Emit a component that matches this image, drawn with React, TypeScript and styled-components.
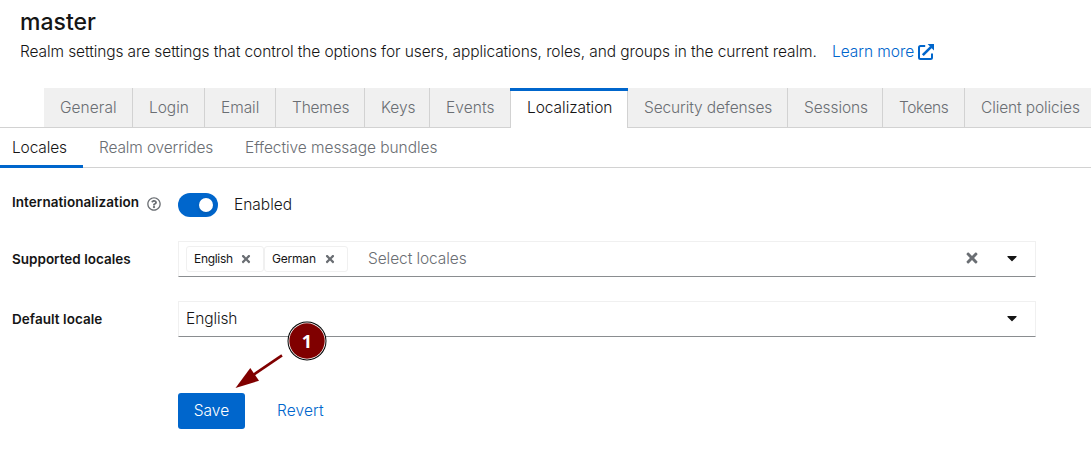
import React from "react";
import styled, { createGlobalStyle } from "styled-components";
import { FaTimes, FaCaretDown, FaRegQuestionCircle } from "react-icons/fa";

const Global = createGlobalStyle`
  *, *::before, *::after { box-sizing: border-box; }
  body { margin: 0; background: #fff; overflow: hidden; }
  #root { font-family: Inter, "Noto Sans", sans-serif; font-size: 15.5px; font-weight: 330; line-height: 24px; color: #151515; }
  button { font: inherit; border: 0; background: none; padding: 0; }
`;

const Page = styled.main`
  position: relative;
  width: 1091px;
  height: 472px;
  overflow: hidden;
`;

const Header = styled.header`
  height: 88px;
  padding: 6px 20px 0;
`;

const Title = styled.h1`
  margin: 0;
  font-size: 23px;
  font-weight: 500;
  line-height: 32px;
`;

const Description = styled.div`
  display: flex;
  align-items: center;
  margin-top: 2px;
  white-space: nowrap;
`;

const Fit = styled.span<{ $ls?: number }>`
  letter-spacing: ${(p) => p.$ls ?? 0}px;
  white-space: nowrap;
`;

const DescriptionText = styled(Fit)`
  width: 812px;
`;

const LearnMore = styled.a`
  display: flex;
  align-items: center;
  color: #06c;
  svg { margin-left: 4px; }
`;

const Tabs = styled.nav`
  display: flex;
  height: 40px;
  padding-left: 44px;
  border-bottom: 1px solid #d2d2d2;
`;

const Tab = styled.button<{ $w: number; $active?: boolean }>`
  flex: none;
  width: ${(p) => p.$w}px;
  height: ${(p) => (p.$active ? 40 : 39)}px;
  padding-left: 16px;
  text-align: left;
  color: ${(p) => (p.$active ? "#151515" : "#6a6e73")};
  background: ${(p) => (p.$active ? "#fff" : "#f0f0f0")};
  box-shadow: inset -1px 0 0 #d2d2d2;
  ${(p) =>
    p.$active &&
    `
    position: relative;
    margin-left: -1px;
    padding-left: 17px;
    box-shadow: inset 0 3px 0 #06c, inset 1px 0 0 #d2d2d2, inset -1px 0 0 #d2d2d2;
  `}
`;

const SubTabs = styled.nav`
  display: flex;
  height: 40px;
  border-bottom: 1px solid #d2d2d2;
`;

const SubTab = styled.button<{ $w: number; $active?: boolean }>`
  width: ${(p) => p.$w}px;
  height: 40px;
  padding: 0 0 0 ${(p) => (p.$active ? 12 : 16)}px;
  text-align: left;
  color: ${(p) => (p.$active ? "#151515" : "#6a6e73")};
  box-shadow: ${(p) => (p.$active ? "inset 0 -3px 0 #06c" : "none")};
`;

const Form = styled.form`
  display: flex;
  flex-direction: column;
  gap: 24px;
  padding: 25px 0 0 12px;
`;

const Row = styled.div`
  display: grid;
  grid-template-columns: 166px 858px;
  align-items: center;
  height: 36px;
`;

const Label = styled.label`
  display: flex;
  align-items: center;
  font-size: 13.5px;
  font-weight: 600;
  svg { margin: 3px 0 0 8px; color: #6a6e73; }
`;

const SwitchRow = styled(Row)`
  align-items: start;
  height: 24px;
  ${Label} { margin-top: -3px; }
`;

const SwitchLine = styled.div`
  display: flex;
  align-items: center;
  gap: 16px;
`;

const Switch = styled.span`
  display: flex;
  align-items: center;
  justify-content: flex-end;
  width: 40px;
  height: 24px;
  padding-right: 5px;
  border-radius: 12px;
  background: #06c;
  &::after {
    content: "";
    width: 14px;
    height: 14px;
    border-radius: 50%;
    background: #fff;
    box-shadow: 0 2px 4px rgba(3, 3, 3, 0.12);
  }
`;

const Select = styled.div`
  display: flex;
  align-items: center;
  height: 36px;
  padding: 0 15px 0 7px;
  border: 1px solid #f0f0f0;
  border-bottom-color: #8a8d90;
`;

const Chip = styled.span<{ $w: number }>`
  display: flex;
  flex: none;
  align-items: center;
  width: ${(p) => p.$w}px;
  height: 26px;
  padding-left: 7px;
  border: 1px solid #f0f0f0;
  border-radius: 3px;
  font-size: 12px;
  font-weight: 400;
  svg { margin-left: auto; margin-right: 11px; color: #6a6e73; }
`;

const Placeholder = styled(Fit)`
  margin-left: 20px;
  color: #6a6e73;
`;

const SelectIcons = styled.span`
  display: flex;
  align-items: center;
  gap: 24px;
  margin-left: auto;
  svg { margin-top: -2px; }
  svg:first-child:not(:last-child) { color: #6a6e73; }
`;

const Actions = styled.div`
  display: flex;
  gap: 32px;
  padding: 32px 0 0 166px;
`;

const SaveButton = styled.button`
  width: 67px;
  height: 36px;
  border-radius: 3px;
  color: #fff;
  background: #06c;
`;

const RevertButton = styled.button`
  height: 36px;
  color: #06c;
`;

const Callout = styled.svg`
  position: absolute;
  left: 230px;
  top: 316px;
`;

const ExternalIcon = () => (
  <svg width="17" height="16" viewBox="0 0 17 16" fill="none" stroke="#06c" strokeWidth="2">
    <path d="M7.2 2H2.5Q1 2 1 3.5V13.5Q1 15 2.5 15H12.5Q14 15 14 13.5V9.5" />
    <path d="M4.8 11.2 13.2 2.8" strokeWidth="2.6" />
    <path d="M9.6 0H16V6.4Z" fill="#06c" stroke="none" />
  </svg>
);

const tabs: [string, number, number][] = [
  ["General", 89, 0.05],
  ["Login", 72, -0.05],
  ["Email", 71, -0.05],
  ["Themes", 89, -0.2],
  ["Keys", 65, -0.05],
  ["Events", 81, 0.1],
  ["Localization", 118, -0.05],
  ["Security defenses", 160, -0.12],
  ["Sessions", 95, -0.1],
  ["Tokens", 82, -0.4],
  ["Client policies", 140, -0.12],
];

export default function App() {
  return (
    <Page>
      <Global />
      <Header>
        <Title>master</Title>
        <Description>
          <DescriptionText $ls={-0.1}>
            Realm settings are settings that control the options for users, applications, roles, and groups in the current realm.
          </DescriptionText>
          <LearnMore>
            <Fit $ls={-0.05}>Learn more</Fit>
            <ExternalIcon />
          </LearnMore>
        </Description>
      </Header>
      <Tabs>
        {tabs.map(([name, w, ls]) => (
          <Tab key={name} type="button" $w={w} $active={name === "Localization"}>
            <Fit $ls={ls}>{name}</Fit>
          </Tab>
        ))}
      </Tabs>
      <SubTabs>
        <SubTab $w={83} $active><Fit $ls={-0.15}>Locales</Fit></SubTab>
        <SubTab $w={146}><Fit $ls={-0.15}>Realm overrides</Fit></SubTab>
        <SubTab $w={240}><Fit $ls={-0.06}>Effective message bundles</Fit></SubTab>
      </SubTabs>
      <Form>
        <SwitchRow>
          <Label>
            <Fit $ls={0.06}>Internationalization</Fit>
            <FaRegQuestionCircle size={14} />
          </Label>
          <SwitchLine>
            <Switch />
            <Fit>Enabled</Fit>
          </SwitchLine>
        </SwitchRow>
        <Row>
          <Label><Fit>Supported locales</Fit></Label>
          <Select>
            <Chip $w={78}><Fit $ls={-0.3}>English</Fit><FaTimes size={12} /></Chip>
            <Chip $w={84}><Fit $ls={-0.2}>German</Fit><FaTimes size={12} /></Chip>
            <Placeholder $ls={-0.08}>Select locales</Placeholder>
            <SelectIcons><FaTimes size={16} /><FaCaretDown size={16} /></SelectIcons>
          </Select>
        </Row>
        <Row>
          <Label><Fit $ls={0.05}>Default locale</Fit></Label>
          <Select>
            <Fit $ls={-0.1}>English</Fit>
            <SelectIcons><FaCaretDown size={16} /></SelectIcons>
          </Select>
        </Row>
        <Actions>
          <SaveButton type="button"><Fit>Save</Fit></SaveButton>
          <RevertButton type="button"><Fit $ls={0.12}>Revert</Fit></RevertButton>
        </Actions>
      </Form>
      <Callout width="100" height="76" viewBox="230 316 100 76">
        <path d="M282 355.3 253 375" stroke="#800000" strokeWidth="2.6" />
        <path d="M235.5 388 250.3 368 259 380.8Z" fill="#800000" />
        <circle cx="307" cy="341" r="19.5" fill="#000" />
        <circle cx="307" cy="341" r="18.5" fill="#fff" />
        <circle cx="307" cy="341" r="17.7" fill="#800000" />
        <text x="307" y="347.5" textAnchor="middle" fill="#fff" fontFamily="Open Sans, sans-serif" fontWeight="700" fontSize="18">1</text>
      </Callout>
    </Page>
  );
}
